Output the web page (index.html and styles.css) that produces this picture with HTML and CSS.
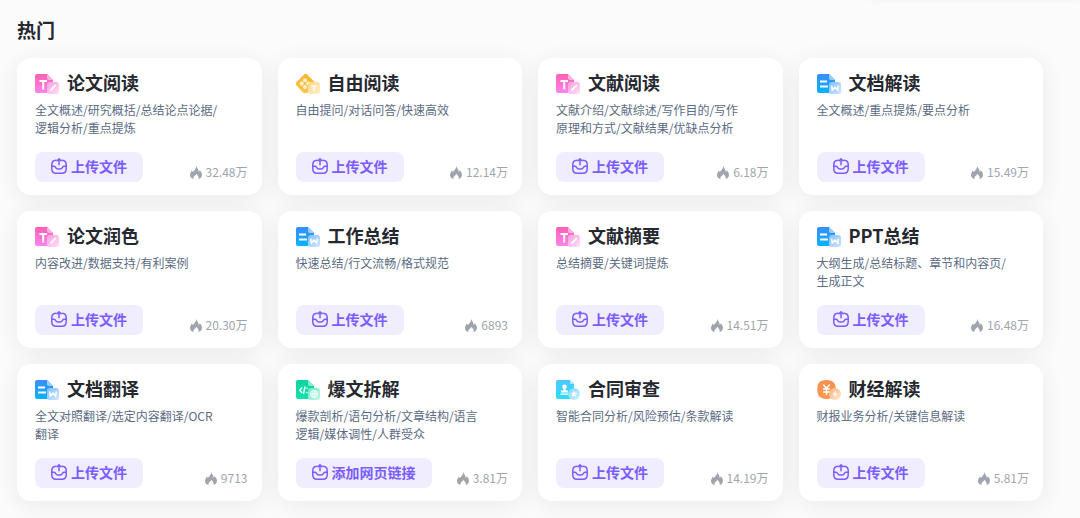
FILE: index.html
```html
<!DOCTYPE html>
<html lang="zh-CN">
<head>
  <meta charset="UTF-8" />
  <meta name="viewport" content="width=device-width, initial-scale=1.0"/>
  <title>热门</title>
  <link rel="stylesheet" href="styles.css">
</head>
<body>

  <!-- shared icons -->
  <svg class="sprite" width="0" height="0" aria-hidden="true">
    <defs>
      <linearGradient id="pink" x1="0" y1="0" x2="0" y2="1"><stop offset="0" stop-color="#ff5fb4"/><stop offset="1" stop-color="#ff83ec"/></linearGradient>
      <linearGradient id="pinkLight" x1="0" y1="0" x2="1" y2="1"><stop offset="0" stop-color="#ff9ede"/><stop offset="1" stop-color="#ffe0f6"/></linearGradient>
      <linearGradient id="blue" x1="0" y1="0" x2="0" y2="1"><stop offset="0" stop-color="#3a8dff"/><stop offset="1" stop-color="#05b4ff"/></linearGradient>
      <linearGradient id="blueLight" x1="0" y1="0" x2="1" y2="1"><stop offset="0" stop-color="#7fc0ff"/><stop offset="1" stop-color="#d3e4ff"/></linearGradient>
      <linearGradient id="yellow" x1="0" y1="0" x2="0" y2="1"><stop offset="0" stop-color="#ffb52e"/><stop offset="1" stop-color="#ffc64a"/></linearGradient>
      <linearGradient id="yellowLight" x1="0" y1="0" x2="1" y2="1"><stop offset="0" stop-color="#ffd684"/><stop offset="1" stop-color="#fff0cc"/></linearGradient>
      <linearGradient id="green" x1="0" y1="0" x2="0" y2="1"><stop offset="0" stop-color="#0bd3a0"/><stop offset="1" stop-color="#12e2ab"/></linearGradient>
      <linearGradient id="greenLight" x1="0" y1="0" x2="1" y2="1"><stop offset="0" stop-color="#6ae7c5"/><stop offset="1" stop-color="#c5f8e8"/></linearGradient>
      <linearGradient id="cyan" x1="0" y1="0" x2="0" y2="1"><stop offset="0" stop-color="#4cc9ff"/><stop offset="1" stop-color="#2edcf7"/></linearGradient>
      <linearGradient id="cyanLight" x1="0" y1="0" x2="1" y2="1"><stop offset="0" stop-color="#7bdcfb"/><stop offset="1" stop-color="#caf0ff"/></linearGradient>
      <linearGradient id="orange" x1="0" y1="0" x2="0" y2="1"><stop offset="0" stop-color="#f98e4d"/><stop offset="1" stop-color="#ff9a55"/></linearGradient>
      <linearGradient id="orangeLight" x1="0" y1="0" x2="1" y2="1"><stop offset="0" stop-color="#ffb47f"/><stop offset="1" stop-color="#ffe6cf"/></linearGradient>
    </defs>

    <symbol id="icon-paper" viewBox="0 0 24 20">
      <path d="M2 0h10l6 6v11a2 2 0 0 1-2 2H2a2 2 0 0 1-2-2V2a2 2 0 0 1 2-2z" fill="url(#pink)"/>
      <path d="M12 0l6 6h-4a2 2 0 0 1-2-2z" fill="#ffb3de"/>
      <path d="M4.500 7h7.500M8.200 7v8.500" fill="none" stroke="#fff" stroke-width="2"/>
      <rect x="12" y="8" width="12" height="12" rx="2.500" fill="url(#pinkLight)"/>
      <path d="M14.800 17.200l.7-2.300 4.600-4.400 1.300 1.300-4.600 4.600z" fill="#fff"/>
    </symbol>

    <symbol id="icon-doc" viewBox="0 0 24 20">
      <path d="M2 0h10l6 6v11a2 2 0 0 1-2 2H2a2 2 0 0 1-2-2V2a2 2 0 0 1 2-2z" fill="url(#blue)"/>
      <path d="M12 0l6 6h-4a2 2 0 0 1-2-2z" fill="#9bceff"/>
      <path d="M3 7.500h7M3 12.500h8" fill="none" stroke="#fff" stroke-width="1.800"/>
      <rect x="12" y="8" width="12" height="12" rx="2.500" fill="url(#blueLight)"/>
      <path d="M14.700 11.500l.6 4.600 2.700-2.900 2.700 2.900.6-4.600" fill="none" stroke="#fff" stroke-width="1.500"/>
    </symbol>

    <symbol id="icon-free" viewBox="0 0 24 20">
      <path d="M7.600.9a2.800 2.800 0 0 1 4 0l6.900 6.900a2.800 2.800 0 0 1 0 4l-6.600 6.600a2.800 2.800 0 0 1-2 .8H9a2.800 2.800 0 0 1-2-.8L.8 11.800a2.800 2.800 0 0 1 0-4z" fill="url(#yellow)"/>
      <g fill="#fff4d8">
        <circle cx="9" cy="6.200" r="2"/><circle cx="5.700" cy="9.600" r="2"/>
        <circle cx="12.300" cy="9.600" r="2"/><circle cx="9" cy="13" r="2"/>
      </g>
      <rect x="12" y="8" width="12" height="12" rx="2.500" fill="url(#yellowLight)"/>
      <path d="M15.200 12h5.600M18 12v5" fill="none" stroke="#fff" stroke-width="1.500"/>
    </symbol>

    <symbol id="icon-code" viewBox="0 0 24 20">
      <path d="M2 0h10l6 6v11a2 2 0 0 1-2 2H2a2 2 0 0 1-2-2V2a2 2 0 0 1 2-2z" fill="url(#green)"/>
      <path d="M12 0l6 6h-4a2 2 0 0 1-2-2z" fill="#8aecd0"/>
      <path d="M6.200 7.500L3.800 10.300l2.400 2.700M9 6.500l-1.500 7.500M11 7.500v1.200M11 12v1.200" fill="none" stroke="#fff" stroke-width="1.400"/>
      <rect x="12" y="8" width="12" height="12" rx="2.500" fill="url(#greenLight)"/>
      <path d="M14.500 14h7M18 10.500v7" stroke="#fff" stroke-width="1"/>
      <circle cx="18" cy="14" r="3.600" fill="none" stroke="#fff" stroke-width="1"/>
      <ellipse cx="18" cy="14" rx="1.800" ry="3.600" fill="none" stroke="#fff" stroke-width=".7"/>
    </symbol>

    <symbol id="icon-contract" viewBox="0 0 24 20">
      <path d="M2 0h12l4 4v13a2 2 0 0 1-2 2H2a2 2 0 0 1-2-2V2a2 2 0 0 1 2-2z" fill="url(#cyan)"/>
      <path d="M14 0l4 4h-2.500a1.500 1.500 0 0 1-1.500-1.500z" fill="#b2eaff"/>
      <circle cx="8.500" cy="6.800" r="2.300" fill="#fff"/>
      <path d="M7.600 8h1.800l.4 2.500H12v2H5v-2h2.200zM4.500 13.500h8v1.300h-8z" fill="#fff"/>
      <circle cx="18" cy="14" r="6" fill="url(#cyanLight)"/>
      <path d="M18 10.500l1 2.300 2.500.2-1.900 1.600.6 2.500-2.200-1.300-2.200 1.300.6-2.500-1.900-1.600 2.500-.2z" fill="#fff"/>
    </symbol>

    <symbol id="icon-finance" viewBox="0 0 24 20">
      <path d="M6 .5Q9.500-.5 13 .5q4.500 1 5.300 5 .9 4 0 8-.8 4-5.300 5-3.500 1-7 0-4.500-1-5.300-5-.9-4 0-8Q1.500 1.500 6 .5z" fill="url(#orange)"/>
      <path d="M6.300 4.500l3.200 4 3.200-4M9.500 8.500v6.500M6 9h7M6 12h7" fill="none" stroke="#fff" stroke-width="1.400"/>
      <circle cx="18" cy="14" r="6" fill="url(#orangeLight)"/>
      <path d="M19 10l-3.500 4.600h2.200L17 18l3.500-4.700h-2.200z" fill="#fff"/>
    </symbol>

    <symbol id="icon-upload" viewBox="0 0 16 16">
      <g fill="none" stroke="currentColor" stroke-width="1.500" stroke-linecap="round" stroke-linejoin="round">
        <path d="M5 2.200C2.500 2.300.8 3.400.8 6.500v4.200c0 3 1.300 4.500 4.200 4.500h6c2.900 0 4.200-1.500 4.200-4.500V6.500c0-3.100-1.700-4.200-4.200-4.300"/>
        <path d="M.9 8.200h2c.8 0 1.200.4 1.600 1.100.5 1.200 1.300 1.800 2.500 1.800h2c1.200 0 2-.6 2.500-1.800.4-.7.800-1.100 1.600-1.100h2"/>
        <path d="M8 6.800V1M6 2.800l2-2 2 2"/>
      </g>
    </symbol>

    <symbol id="icon-fire" viewBox="0 0 12 13">
      <path d="M6.300 0c.4 2.200 2.600 3.200 2.400 5.900.6-.4.900-1 .9-1.700C11 5.300 12 7 12 8.700c0 2.200-1.500 3.800-3.300 4.300.5-2.500-1-3.400-2.300-5.300C5.800 9.700 3 10 3.500 13 1.500 12.600 0 10.900 0 8.900c0-1.900 1.100-2.900 1.800-4.500.5.500.7 1 .7 1.700C4.300 4.600 6.100 2.900 6.300 0z" fill="currentColor"/>
    </symbol>
  </svg>

  <main class="container">
    <h1>热门</h1>
    <div class="card-list" id="cardList"></div>
  </main>

  <script>
    const cards = [
      { icon: "paper", title: "论文阅读", desc: "全文概述/研究概括/总结论点论据/逻辑分析/重点提炼", hot: "32.48万" },
      { icon: "free", title: "自由阅读", desc: "自由提问/对话问答/快速高效", hot: "12.14万" },
      { icon: "paper", title: "文献阅读", desc: "文献介绍/文献综述/写作目的/写作原理和方式/文献结果/优缺点分析", hot: "6.18万" },
      { icon: "doc", title: "文档解读", desc: "全文概述/重点提炼/要点分析", hot: "15.49万" },
      { icon: "paper", title: "论文润色", desc: "内容改进/数据支持/有利案例", hot: "20.30万" },
      { icon: "doc", title: "工作总结", desc: "快速总结/行文流畅/格式规范", hot: "6893" },
      { icon: "paper", title: "文献摘要", desc: "总结摘要/关键词提炼", hot: "14.51万" },
      { icon: "doc", title: "PPT总结", desc: "大纲生成/总结标题、章节和内容页/生成正文", hot: "16.48万" },
      { icon: "doc", title: "文档翻译", desc: "全文对照翻译/选定内容翻译/OCR<br>翻译", hot: "9713" },
      { icon: "code", title: "爆文拆解", desc: "爆款剖析/语句分析/文章结构/语言逻辑/媒体调性/人群受众", hot: "3.81万", button: "添加网页链接" },
      { icon: "contract", title: "合同审查", desc: "智能合同分析/风险预估/条款解读", hot: "14.19万" },
      { icon: "finance", title: "财经解读", desc: "财报业务分析/关键信息解读", hot: "5.81万" }
    ];

    const list = document.getElementById("cardList");
    cards.forEach(card => {
      const el = document.createElement("section");
      el.className = "card";
      el.innerHTML = `
        <div class="card-title">
          <svg class="card-icon" aria-hidden="true"><use href="#icon-${card.icon}"/></svg>
          <h2>${card.title}</h2>
        </div>
        <p class="card-desc">${card.desc}</p>
        <div class="card-footer">
          <button type="button" class="upload-btn">
            <svg class="upload-icon" aria-hidden="true"><use href="#icon-upload"/></svg>
            <span>${card.button || "上传文件"}</span>
          </button>
          <div class="hot">
            <svg class="fire-icon" aria-hidden="true"><use href="#icon-fire"/></svg>
            <span>${card.hot}</span>
          </div>
        </div>`;
      list.appendChild(el);
    });
  </script>

</body>
</html>
```
FILE: styles.css
```css
body {
  font-family: "Noto Sans CJK SC", sans-serif;
  background: #fbfbfb;
  margin: 0;
  color: #26282f;
}
/* shadow of the panel above the list */
body::before {
  content: "";
  position: absolute;
  top: -20px;
  right: 0;
  width: 210px;
  height: 18px;
  box-shadow: 0 0 10px rgba(0, 0, 0, 0.08);
  clip-path: inset(0 0 -20px -20px);
}
h1, h2, p {
  margin: 0;
}
.sprite {
  position: absolute;
}
.container {
  padding: 17px 37px 17px 17px;
}
h1 {
  font-size: 19px;
  line-height: 26px;
  font-weight: bold;
  margin-bottom: 15px;
}
.card-list {
  display: grid;
  grid-template-columns: repeat(4, 1fr);
  gap: 16px;
}
.card {
  background: #fff;
  border-radius: 14px;
  padding: 12px 14px 13px 18px;
  box-shadow: 0 4px 24px rgba(0, 0, 0, 0.07);
}
.card-title {
  display: flex;
  align-items: flex-end;
  gap: 8px;
}
.card-title h2 {
  font-size: 18px;
  line-height: 24px;
  font-weight: bold;
}
.card-icon {
  width: 24px;
  height: 20px;
}
.card-desc {
  font-size: 12px;
  line-height: 18px;
  min-height: 36px;
  max-width: 190px;
  margin: 7px 0 15px;
  color: #5b6b82;
}
.card-footer {
  display: flex;
  justify-content: space-between;
  align-items: flex-end;
}
.upload-btn {
  display: flex;
  align-items: center;
  gap: 4px;
  height: 30px;
  padding: 0 16px 2px;
  border: none;
  border-radius: 8px;
  background: #f0edff;
  color: #7a5cff;
  font-family: inherit;
  font-size: 14px;
  font-weight: bold;
  cursor: pointer;
}
.upload-btn:hover {
  background: #e6e0ff;
}
.upload-icon {
  width: 16px;
  height: 16px;
}
.hot {
  display: flex;
  align-items: center;
  gap: 4px;
  font-size: 12px;
  line-height: 20px;
  color: #a0a5ad;
}
.fire-icon {
  width: 12px;
  height: 13px;
}
```
